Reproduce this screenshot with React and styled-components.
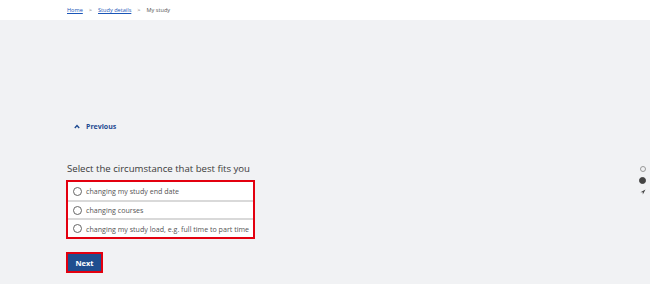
import React from "react";
import styled, { createGlobalStyle } from "styled-components";

const Global = createGlobalStyle`
  html, body { margin: 0; padding: 0; background: #f1f2f4; }
  body { font-family: "Open Sans", "Noto Sans", Arial, sans-serif; }
  * { box-sizing: border-box; }
`;

const Page = styled.div`
  width: 650px;
  height: 284px;
  display: flex;
  flex-direction: column;
  position: relative;
  overflow: hidden;
`;

const Header = styled.header`
  height: 20px;
  background: #ffffff;
  display: flex;
  align-items: center;
  padding-left: 67px;
  gap: 6px;
  font-size: 5.6px;
  color: #555;
`;

const Crumb = styled.a`
  color: #1a56b8;
  text-decoration: underline;
`;

const Sep = styled.span`
  color: #666;
`;

const Main = styled.main`
  flex: 1;
  background: #f1f2f4;
  padding: 100px 0 0 66px;
  display: flex;
  flex-direction: column;
  align-items: flex-start;
`;

const PrevLink = styled.a`
  display: flex;
  align-items: center;
  gap: 6px;
  margin-left: 8px;
  font-size: 7px;
  font-weight: 700;
  color: #1d4a91;
  height: 12px;
`;

const Heading = styled.h2`
  margin: 30px 0 0 1px;
  font-size: 9.6px;
  font-weight: 400;
  color: #3a3a3a;
  line-height: 14px;
`;

const Options = styled.div`
  margin-top: 4px;
  width: 189px;
  border: 2px solid #e3000f;
  background: #ffffff;
  display: flex;
  flex-direction: column;
`;

const Option = styled.label`
  height: ${(p) => (p.$last ? "19px" : "18px")};
  display: flex;
  align-items: center;
  gap: 4px;
  padding-left: 5px;
  font-size: 7.1px;
  white-space: nowrap;
  color: #555;
  border-top: ${(p) => (p.$first ? "none" : "2px solid #d9d9d9")};
`;

const Radio = styled.span`
  width: 9px;
  height: 9px;
  border-radius: 50%;
  border: 1px solid #666;
  background: #fff;
  flex: none;
`;

const NextWrap = styled.div`
  margin-top: 13px;
  border: 2px solid #e3000f;
  padding: 0;
`;

const NextButton = styled.button`
  width: 33px;
  height: 17px;
  background: #1f4e8f;
  color: #fff;
  border: none;
  font-family: inherit;
  font-size: 7.5px;
  font-weight: 700;
  padding: 0;
  display: flex;
  align-items: center;
  justify-content: center;
`;

const SideNav = styled.div`
  position: absolute;
  right: 4px;
  top: 166px;
  display: flex;
  flex-direction: column;
  align-items: center;
  gap: 5px;
`;

const Dot = styled.span`
  width: ${(p) => (p.$filled ? "7px" : "6px")};
  height: ${(p) => (p.$filled ? "7px" : "6px")};
  border-radius: 50%;
  border: 1px solid ${(p) => (p.$filled ? "#444" : "#999")};
  background: ${(p) => (p.$filled ? "#444" : "transparent")};
`;

export default function App() {
  const options = [
    "changing my study end date",
    "changing courses",
    "changing my study load, e.g. full time to part time",
  ];
  return (
    <Page>
      <Global />
      <Header>
        <Crumb>Home</Crumb>
        <Sep>&gt;</Sep>
        <Crumb>Study details</Crumb>
        <Sep>&gt;</Sep>
        <span>My study</span>
      </Header>
      <Main>
        <PrevLink>
          <svg width="6" height="5" viewBox="0 0 6 5">
            <path d="M0.8 4 L3 1.6 L5.2 4" fill="none" stroke="#1d4a91" strokeWidth="1.4" />
          </svg>
          Previous
        </PrevLink>
        <Heading>Select the circumstance that best fits you</Heading>
        <Options>
          {options.map((o, i) => (
            <Option key={o} $first={i === 0} $last={i === options.length - 1}>
              <Radio />
              {o}
            </Option>
          ))}
        </Options>
        <NextWrap>
          <NextButton>Next</NextButton>
        </NextWrap>
      </Main>
      <SideNav>
        <Dot />
        <Dot $filled />
        <svg width="6" height="6" viewBox="0 0 6 6">
          <path d="M5.5 0.5 L0.5 3.2 L2.8 3.2 L2.8 5.5 Z" fill="#444" />
        </svg>
      </SideNav>
    </Page>
  );
}
